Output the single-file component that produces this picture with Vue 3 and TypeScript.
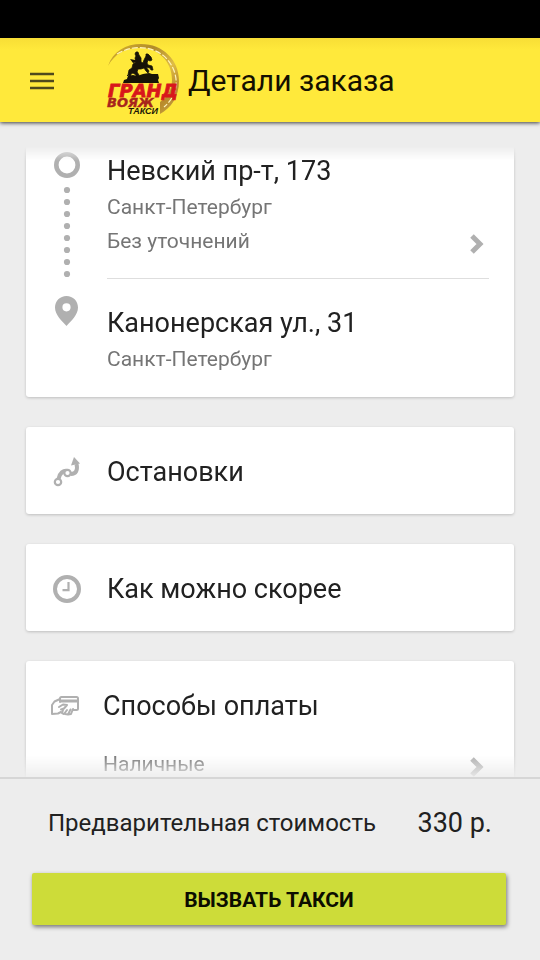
<script setup lang="ts">
interface RoutePoint {
  address: string
  city: string
  note?: string
}

const route: RoutePoint[] = [
  { address: 'Невский пр-т, 173', city: 'Санкт-Петербург', note: 'Без уточнений' },
  { address: 'Канонерская ул., 31', city: 'Санкт-Петербург' },
]

const payment = 'Наличные'
const price = '330 р.'
const dots = Array.from({ length: 8 }, (_, i) => 38 + i * 12)
</script>

<template>
  <div class="page">
    <div class="status-bar"></div>

    <header class="app-bar">
      <button class="menu" type="button" aria-label="Меню">
        <svg width="24" height="18" viewBox="0 0 24 18">
          <path d="M0 2h24M0 9h24M0 16h24" stroke="#4f4a1c" stroke-width="2.4" />
        </svg>
      </button>
      <svg class="logo" width="76" height="76" viewBox="0 0 76 76" role="img" aria-label="Гранд Вояж Такси">
        <defs>
          <linearGradient id="gold" x1="0" y1="0" x2="1" y2="1">
            <stop offset="0" stop-color="#d9b52f" />
            <stop offset="0.35" stop-color="#b08a2a" />
            <stop offset="0.6" stop-color="#e0bd45" />
            <stop offset="0.8" stop-color="#b98a2a" />
            <stop offset="1" stop-color="#c9ab4a" />
          </linearGradient>
        </defs>
        <path d="M3 24C8 9 21 2 36 2c22 0 38 16 38 37 0 16-8 27-19 33V60c6-4 12-11 12-22C67 19 53 6 36 6 22 5 10 11 3 24Z" fill="url(#gold)" />
        <path d="M12 12C30 1 51 5 62 17c7 8 10 18 9 27-1 8-5 15-12 21" fill="none" stroke="#fff3bd" stroke-width="1.2" stroke-dasharray="6 2" />
        <path d="M18 41l1-3 3-1 1-3 5-1 4 1 6-2 6-1 3 1 6 0 1 4-1 2 1 3z" fill="#171307" />
        <path
          d="M23 33l1-5 3-2 1-4 3-2-1-4 1-2-1-2 1-2 2 0 1 3 2 3 0 4 2 1 1-3 2-4 0-2 2 0 3 3 1 3-2 1-2-1-1 3 1 2 4 1 1 4-2 0-1-2-4-1 3 4-1 2-2-2-2-3-3 1-3 0-1 3 2 3-1 3-2 0 0-3-3-2-2 1-1 5-2 0 1-5-2 2z"
          fill="#171307"
          stroke="#171307"
          stroke-width="0.8"
        />
        <path d="M25 17l5 1 3-1-1 3-4 1z" fill="#171307" />
        <text>
          <tspan class="logo-grand" x="3" y="55">ГРАНД</tspan>
          <tspan class="logo-voyage" x="2" y="65">ВОЯЖ</tspan>
          <tspan class="logo-taxi" x="23" y="72">ТАКСИ</tspan>
        </text>
      </svg>
      <h1>Детали заказа</h1>
    </header>

    <main class="content">
      <section class="card route">
        <svg class="track" width="26" height="174" viewBox="0 0 26 174" aria-hidden="true">
          <circle cx="13" cy="13" r="10.7" fill="none" stroke="#b0b0b0" stroke-width="4.6" />
          <circle v-for="y in dots" :key="y" cx="13" :cy="y" r="3.1" fill="#b0b0b0" />
          <path
            fill-rule="evenodd"
            d="M12.500 144C6 144 1 149 1 155.500c0 7.500 7 13.500 11.500 18.500C17 169 24 163 24 155.500 24 149 19 144 12.500 144Zm0 7.200a4.100 4.100 0 1 1 0 8.200 4.100 4.100 0 0 1 0-8.200Z"
            fill="#b0b0b0"
          />
        </svg>
        <div class="points">
          <div v-for="point in route" :key="point.address" class="point">
            <h2>{{ point.address }}</h2>
            <p class="sub">{{ point.city }}</p>
            <button v-if="point.note" class="sub more" type="button">
              <span>{{ point.note }}</span>
              <svg width="14" height="20" viewBox="0 0 14 20" aria-hidden="true">
                <path d="M2 2l8 8-8 8" />
              </svg>
            </button>
          </div>
        </div>
      </section>

      <button class="card option" type="button">
        <svg class="icon" width="28" height="30" viewBox="0 0 28 30" aria-hidden="true">
          <g fill="none" stroke="#b0b0b0">
            <path d="M5.500 22c1-6 5-9 9-8M18 17c5 0 7-4 5.500-10" stroke-width="4" />
            <circle cx="5" cy="25" r="3.200" stroke-width="2.200" fill="#fff" />
            <circle cx="14.500" cy="16" r="3.200" stroke-width="2.200" fill="#fff" />
          </g>
          <path d="M21 0l6 6.500-9 2z" fill="#b0b0b0" />
        </svg>
        <span>Остановки</span>
      </button>

      <button class="card option" type="button">
        <svg class="icon" width="28" height="28" viewBox="0 0 28 28" aria-hidden="true">
          <circle cx="14" cy="14" r="12" fill="none" stroke="#b0b0b0" stroke-width="4" />
          <path d="M15.500 7v8.200H9.500" fill="none" stroke="#b0b0b0" stroke-width="2.200" />
        </svg>
        <span>Как можно скорее</span>
      </button>

      <section class="card payment">
        <div class="payment-head">
          <svg class="icon" width="28" height="20" viewBox="0 0 28 20" aria-hidden="true">
            <g fill="none" stroke="#b0b0b0" stroke-width="2" stroke-linejoin="round" stroke-linecap="round">
              <path d="M9 3L3.500 5.500 1 9v9l6-.500 3-1.500" />
              <path d="M9 6V2.500Q9 1 10.500 1h15Q27 1 27 2.500v10q0 1.500-1.500 1.500H22" />
              <path d="M10 5h16" stroke-width="3" />
              <path d="M8 11l4-2.500 4 .500-3 3.500-3 1M12 14l-1 3 2 1 3-4M14 18l3 .500 2.500-5M17 18.500l3-.500 2-5" />
            </g>
          </svg>
          <h2>Способы оплаты</h2>
        </div>
        <button class="sub more" type="button">
          <span>{{ payment }}</span>
          <svg width="14" height="20" viewBox="0 0 14 20" aria-hidden="true">
            <path d="M2 2l8 8-8 8" />
          </svg>
        </button>
      </section>
    </main>

    <footer class="summary">
      <div class="cost">
        <span>Предварительная стоимость</span>
        <strong>{{ price }}</strong>
      </div>
      <button class="order" type="button">ВЫЗВАТЬ ТАКСИ</button>
    </footer>
  </div>
</template>

<style>
body {
  margin: 0;
  background: #ededed;
}
</style>

<style scoped>
.page {
  display: flex;
  flex-direction: column;
  height: 100vh;
  background: #ededed;
  color: #212121;
  font-family: Roboto, sans-serif;
}

h1,
h2,
p {
  margin: 0;
  font-weight: 400;
}

button {
  border: 0;
  padding: 0;
  background: none;
  color: inherit;
  font: inherit;
  text-align: left;
}

svg {
  display: block;
  flex: none;
}

.status-bar {
  flex: none;
  height: 38px;
  background: #000;
}

.app-bar {
  display: flex;
  flex: none;
  align-items: center;
  height: 84px;
  padding: 0 30px;
  background: linear-gradient(#f8de36, #ffe93b 12px);
  box-shadow: 0 1px 4px rgba(0, 0, 0, 0.75);
}

.menu {
  display: flex;
  padding: 18px 0 16px;
}

.logo {
  margin: 0 7px 0 51px;
}

.logo text {
  font-style: italic;
  font-weight: 700;
}

.logo-grand {
  fill: #d8171b;
  stroke: #d8171b;
  stroke-width: 0.8;
  font-family: "DejaVu Sans", sans-serif;
  font-size: 18px;
}

.logo-voyage {
  fill: #a8251c;
  stroke: #a8251c;
  stroke-width: 0.4;
  font-family: "DejaVu Sans", sans-serif;
  font-size: 13px;
}

.logo-taxi {
  fill: #1c1706;
  font-family: "Liberation Sans", sans-serif;
  font-size: 9px;
}

h1 {
  padding-top: 1px;
  color: #140f00;
  font-size: 30px;
  line-height: 36px;
}

h2,
.option {
  font-size: 27px;
  line-height: 36px;
}

.content {
  display: flex;
  flex: 1;
  flex-direction: column;
  gap: 30px;
  min-height: 0;
  margin-top: 24px;
  padding: 0 26px;
  overflow: hidden;
  -webkit-mask-image: linear-gradient(transparent, #000 15px, #000 calc(100% - 22px), rgba(0, 0, 0, 0.1));
  mask-image: linear-gradient(transparent, #000 15px, #000 calc(100% - 22px), rgba(0, 0, 0, 0.1));
}

.card {
  flex: none;
  border-radius: 3px;
  background: #fff;
  box-shadow: 0 1px 3px rgba(0, 0, 0, 0.2);
}

.route {
  display: flex;
  gap: 27px;
  padding: 6px 25px 20px 28px;
}

.points {
  flex: 1;
  padding-top: 1px;
}

.point h2 {
  padding-bottom: 1px;
}

.point + .point {
  margin-top: 20px;
  border-top: 1px solid #dedede;
  padding: 26px 0 1px;
}

.sub {
  color: #757575;
  font-size: 21px;
  line-height: 34px;
}

.more {
  display: flex;
  align-items: center;
  justify-content: space-between;
  width: 100%;
}

.more svg {
  margin: 6px 5px 0 0;
}

.more path {
  fill: none;
  stroke: #b0b0b0;
  stroke-width: 5;
}

.option {
  display: flex;
  align-items: center;
  height: 87px;
  padding: 2px 27px 0;
  gap: 26px;
}

.payment {
  padding: 27px 25px 24px;
}

.payment-head {
  display: flex;
  align-items: center;
  gap: 24px;
}

.payment .more {
  box-sizing: border-box;
  margin-top: 23px;
  padding-left: 52px;
}

.summary {
  flex: none;
  border-top: 2px solid #d6d6d6;
  padding: 26px 34px 35px 32px;
}

.cost {
  display: flex;
  align-items: center;
  justify-content: space-between;
  padding: 0 14px 0 16px;
  font-size: 24px;
  line-height: 36px;
}

.cost strong {
  font-size: 27px;
  font-weight: 400;
}

.order {
  width: 100%;
  height: 52px;
  margin-top: 32px;
  padding-top: 2px;
  border-radius: 2px;
  background: #cddc39;
  box-shadow: 1px 2px 4px rgba(0, 0, 0, 0.5);
  color: #0c0d00;
  font-size: 21px;
  font-weight: 700;
  text-align: center;
}
</style>
